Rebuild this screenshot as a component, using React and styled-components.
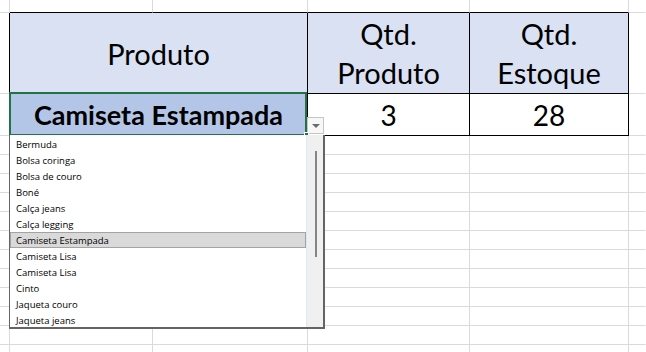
import React from 'react';
import styled, { createGlobalStyle } from 'styled-components';

const GRID = '#dadada';
const INK = '#000000';

const produtos = [
  'Bermuda',
  'Bolsa coringa',
  'Bolsa de couro',
  'Boné',
  'Calça jeans',
  'Calça legging',
  'Camiseta Estampada',
  'Camiseta Lisa',
  'Camiseta Lisa',
  'Cinto',
  'Jaqueta couro',
  'Jaqueta jeans',
];

export default function App() {
  return (
    <>
      <GlobalStyle />
      <Sheet>
        {/* linha de cima, cortada */}
        <Row $h={13}>
          <Cell />
          <Cell $bottom={INK} />
          <Cell $bottom={INK} />
          <Cell $bottom={INK} />
          <Cell $bottom={INK} />
          <Cell $noRight />
        </Row>

        {/* cabeçalho da tabela */}
        <Row $h={81}>
          <Cell $right={INK} />
          <Cell $span={2} $bg="#d9e1f2" $right={INK} $bottom={INK}>
            <HeaderText>Produto</HeaderText>
          </Cell>
          <Cell $bg="#d9e1f2" $right={INK} $bottom={INK}>
            <HeaderText>
              Qtd.
              <br />
              Produto
            </HeaderText>
          </Cell>
          <Cell $bg="#d9e1f2" $right={INK} $bottom={INK}>
            <HeaderText>
              Qtd.
              <br />
              Estoque
            </HeaderText>
          </Cell>
          <Cell $noRight />
        </Row>

        {/* linha de dados, com a célula selecionada */}
        <Row $h={42}>
          <Cell $right={INK} />
          <SelectedCell $span={2} $bg="#b4c6e7" $right={INK} $bottom={INK}>
            <ValueText $bold>Camiseta Estampada</ValueText>
            <FillHandle />
            <DropButton>
              <Arrow />
            </DropButton>
            <DropList>
              <Items>
                {produtos.map((nome, i) => (
                  <Item key={i} $active={nome === 'Camiseta Estampada'}>
                    {nome}
                  </Item>
                ))}
              </Items>
              <ScrollTrack>
                <ScrollThumb />
              </ScrollTrack>
            </DropList>
          </SelectedCell>
          <Cell $right={INK} $bottom={INK}>
            <ValueText>3</ValueText>
          </Cell>
          <Cell $right={INK} $bottom={INK}>
            <ValueText>28</ValueText>
          </Cell>
          <Cell $noRight />
        </Row>

        {Array.from({ length: 12 }).map((_, r) => (
          <Row key={r} $h={19}>
            <Cell />
            <Cell />
            <Cell />
            <Cell />
            <Cell />
            <Cell $noRight />
          </Row>
        ))}
      </Sheet>
    </>
  );
}

const GlobalStyle = createGlobalStyle`
  html, body {
    margin: 0;
    padding: 0;
    background: #ffffff;
    overflow: hidden;
  }
  * {
    box-sizing: border-box;
  }
`;

const Sheet = styled.div`
  display: flex;
  flex-direction: column;
  width: 646px;
  height: 352px;
  overflow: hidden;
  background: #ffffff;
`;

const Row = styled.div`
  display: grid;
  grid-template-columns: 10px 143px 155px 162px 159px 1fr;
  height: ${(p) => p.$h}px;
  flex: none;
`;

const Cell = styled.div`
  grid-column: span ${(p) => p.$span || 1};
  display: flex;
  align-items: center;
  justify-content: center;
  background: ${(p) => p.$bg || 'transparent'};
  border-right: 1px solid ${(p) => (p.$noRight ? 'transparent' : p.$right || GRID)};
  border-bottom: 1px solid ${(p) => p.$bottom || GRID};
  min-width: 0;
`;

const SelectedCell = styled(Cell)`
  position: relative;

  &::after {
    content: '';
    position: absolute;
    top: -2px;
    left: -1px;
    right: 0;
    bottom: -1px;
    border: 2px solid #217346;
    pointer-events: none;
  }
`;

const HeaderText = styled.div`
  font-family: Lato, 'Liberation Sans', sans-serif;
  font-size: 29px;
  line-height: 39px;
  color: #000;
  text-align: center;
`;

const ValueText = styled.div`
  font-family: Lato, 'Liberation Sans', sans-serif;
  font-size: ${(p) => (p.$bold ? 27 : 28)}px;
  font-weight: ${(p) => (p.$bold ? 700 : 400)};
  color: #000;
  white-space: nowrap;
`;

const FillHandle = styled.div`
  position: absolute;
  right: -2px;
  bottom: -2px;
  width: 5px;
  height: 5px;
  background: #217346;
  border: 1px solid #ffffff;
  z-index: 2;
`;

const DropButton = styled.div`
  position: absolute;
  left: 100%;
  top: 23px;
  width: 17px;
  height: 17px;
  display: flex;
  align-items: center;
  justify-content: center;
  background: #f7f7f7;
  border: 1px solid #c6c6c6;
`;

const Arrow = styled.div`
  width: 0;
  height: 0;
  border-left: 4px solid transparent;
  border-right: 4px solid transparent;
  border-top: 4px solid #6b6b6b;
  margin-top: 1px;
`;

const DropList = styled.div`
  position: absolute;
  top: 100%;
  left: -1px;
  width: 316px;
  height: 194px;
  display: flex;
  background: #ffffff;
  border: 1px solid #646464;
  border-top: none;
  border-right-width: 2px;
  border-bottom-width: 2px;
  z-index: 3;
`;

const Items = styled.div`
  flex: 1;
  display: flex;
  flex-direction: column;
  padding-top: 1px;
  border-right: 1px solid #dde8f7;
  overflow: hidden;
`;

const Item = styled.div`
  flex: none;
  height: 16px;
  padding-left: 5px;
  display: flex;
  align-items: center;
  font-family: 'Open Sans', 'Noto Sans', sans-serif;
  font-size: 9.5px;
  color: #000;
  white-space: nowrap;
  background: ${(p) => (p.$active ? '#d9d9d9' : 'transparent')};
  border: 1px solid ${(p) => (p.$active ? '#a3a3a3' : 'transparent')};
`;

const ScrollTrack = styled.div`
  width: 16px;
  flex: none;
  background: #f0f0f0;
  padding: 16px 0 0 8px;
`;

const ScrollThumb = styled.div`
  width: 2px;
  height: 106px;
  background: #868686;
`;
